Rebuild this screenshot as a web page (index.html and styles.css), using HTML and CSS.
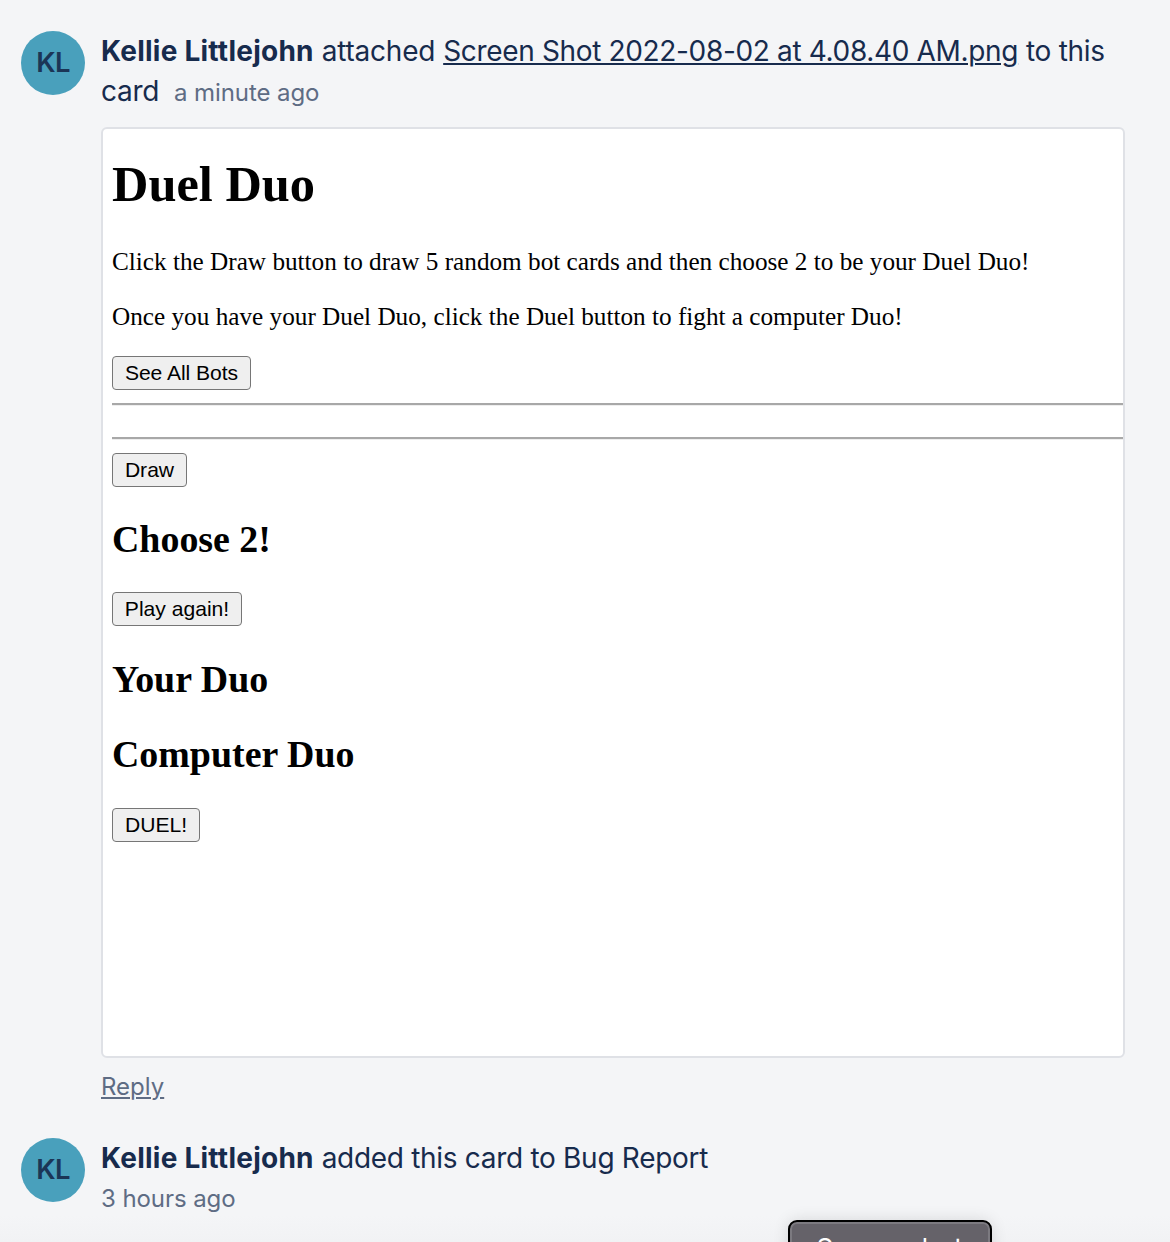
FILE: index.html
```html
<!DOCTYPE html>
<html lang="en">
<head>
<meta charset="utf-8">
<title>Card activity</title>
<link rel="stylesheet" href="styles.css">
</head>
<body>
<main class="activity">
  <article class="entry">
    <div class="avatar">KL</div>
    <div class="content">
      <p class="summary"><strong class="name">Kellie Littlejohn</strong> <span class="verb">attached</span> <a class="file">Screen Shot 2022-08-02 at 4.08.40 AM.png</a> <span class="tail">to this card</span><span class="time inline">a minute ago</span></p>
      <section class="preview">
        <h1>Duel Duo</h1>
        <p class="intro">Click the Draw button to draw 5 random bot cards and then choose 2 to be your Duel Duo!</p>
        <p class="intro second">Once you have your Duel Duo, click the Duel button to fight a computer Duo!</p>
        <button class="see">See All Bots</button>
        <hr>
        <hr class="lower">
        <button class="draw">Draw</button>
        <h2>Choose 2!</h2>
        <button class="again">Play again!</button>
        <h2 class="yours">Your Duo</h2>
        <h2 class="computer">Computer Duo</h2>
        <button class="duel">DUEL!</button>
      </section>
      <a class="reply">Reply</a>
    </div>
  </article>
  <article class="entry second-entry">
    <div class="avatar">KL</div>
    <div class="content">
      <p class="summary"><strong class="name">Kellie Littlejohn</strong> <span class="added">added this card to Bug Report</span></p>
      <div class="time below">3 hours ago</div>
    </div>
  </article>
  <div class="tooltip">Screenshot</div>
</main>
</body>
</html>
```
FILE: styles.css
```css
* { box-sizing: border-box; }
body { margin: 0; background: #f4f5f7; }
.activity {
  position: relative;
  height: 1242px;
  padding: 31px 45px 0 21px;
  overflow: hidden;
  color: #172b4d;
  background: linear-gradient(#f4f5f7 1215px, #f1f2f4);
  font-family: Inter, "Liberation Sans", sans-serif;
}
.entry { display: flex; gap: 16px; }
.second-entry { margin-top: 31px; }
.avatar {
  flex: none;
  width: 64px;
  height: 64px;
  border-radius: 50%;
  background: #49a0bc;
  color: #1b3556;
  font-size: 27.5px;
  font-weight: 600;
  line-height: 63px;
  letter-spacing: -0.8px;
  text-align: center;
}
.content { flex: 1; min-width: 0; }
.summary { margin: 0; font-size: 28px; line-height: 40px; }
.name { font-weight: 700; letter-spacing: 0.24px; }
.verb { letter-spacing: -0.2px; }
.file { letter-spacing: -0.34px; }
.tail, .added { letter-spacing: -0.3px; }
.file, .reply {
  text-decoration: underline;
  text-decoration-thickness: 2px;
  text-underline-offset: 2px;
}
.time { color: #5e6c84; font-size: 24px; line-height: 40px; letter-spacing: -0.08px; }
.inline { margin-left: 15px; }
.below { margin-top: 1px; }
.preview {
  width: 1024px;
  height: 931px;
  margin-top: 14px;
  padding-left: 9px;
  overflow: hidden;
  border: 2px solid #dfe1e6;
  border-radius: 6px;
  background: #fff;
  color: #000;
  font-family: "Liberation Serif", serif;
}
h1 { margin: 27px 0 36px; font-size: 50.4px; line-height: 56px; }
h2 { margin: 31px 0 32px; font-size: 37.9px; line-height: 42px; }
.yours { margin: 32px 0 33px; }
.computer { margin: 33px 0; }
.intro { margin: 0 0 27px; font-size: 25.22px; line-height: 28px; white-space: nowrap; }
.second { margin-bottom: 25px; }
button {
  display: block;
  height: 34px;
  padding: 0 0 1px;
  border: 1.5px solid #767676;
  border-radius: 4px;
  background: #efefef;
  color: #000;
  font: 21.1px/30px "Liberation Sans", sans-serif;
}
.see { width: 139px; letter-spacing: -0.05px; }
.draw { width: 75px; }
.again { width: 130px; }
.duel { width: 88px; }
hr { height: 2px; margin: 13px 0 32px; border: 0; background: #a8a8a8; box-shadow: 0 1px #eee; }
.lower { margin: 0 0 14px; }
.reply { display: table; margin-top: 9px; color: #5e6c84; font-size: 24px; line-height: 40px; }
.tooltip {
  position: absolute;
  left: 788px;
  top: 1220px;
  width: 204px;
  height: 54px;
  padding-top: 3px;
  border: 2px solid #000;
  border-radius: 9px;
  background: #656269;
  box-shadow: inset 0 0 0 2px #7c7a80, 0 0 16px rgba(0, 0, 0, .12);
  color: #fff;
  font-size: 26px;
  line-height: 46px;
  letter-spacing: 0.7px;
  text-align: center;
}
```
